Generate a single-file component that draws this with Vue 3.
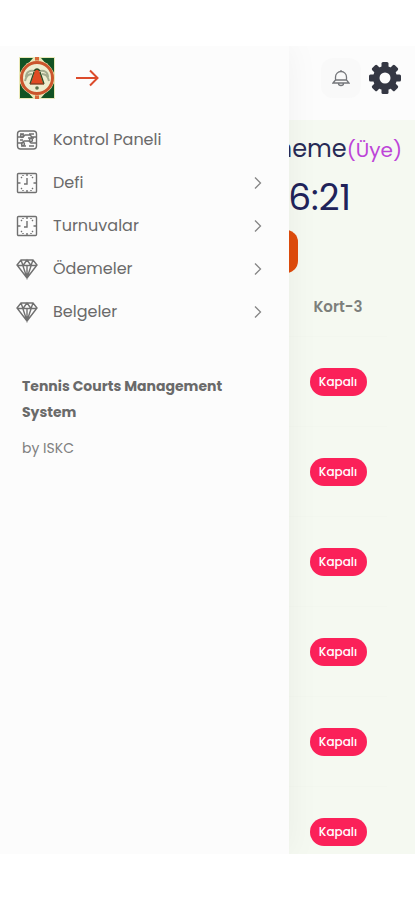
<template>
  <div class="screen">
    <div class="app">
      <!-- Drawer -->
      <aside class="drawer">
        <div class="drawer-head">
          <a href="#" class="brand" aria-label="ISKC">
            <svg width="36" height="42" viewBox="0 0 36 42">
              <rect width="36" height="42" fill="#e9e8b8" />
              <path d="M1 1h13L1 16zM35 1H22l13 15zM1 41h13L1 26zM35 41H22l13-15z" fill="#125223" />
              <path d="M16 0h4v4h-4zM16 38h4v4h-4z" fill="#d9683a" />
              <circle cx="18" cy="21" r="17.5" fill="#e9e3b0" />
              <circle cx="18" cy="21" r="15.5" fill="#eeedcf" stroke="#cb552c" stroke-width="3" />
              <path d="M7 20c0-5 4-7 8-6M6 24c1-5 4-7 7-7M29 20c0-5-4-7-8-6M30 24c-1-5-4-7-7-7" fill="none" stroke="#a3ab8d" stroke-width="2" />
              <path d="M18 12c2.500 0 2.500 3 3.500 6l3 9h-13l3-9c1-3 1-6 3.500-6z" fill="#e04a22" />
              <path d="M15 15l-4 12M21 15l4 12M15 14q3-4 6 0" fill="none" stroke="#2c4c25" stroke-width="1.3" />
              <path d="M11 27h14" stroke="#7b3b20" stroke-width="1.3" />
              <circle cx="18" cy="31" r="1.8" fill="#59724b" />
            </svg>
          </a>
          <button class="icon-btn" type="button" aria-label="Menüyü kapat">
            <svg width="24" height="18" viewBox="0 0 24 18" fill="none" stroke="#dc4b2b" stroke-width="2">
              <path d="M1 9h21M15 1.500L22.500 9 15 16.500" />
            </svg>
          </button>
        </div>

        <nav class="menu">
          <a v-for="item in items" :key="item.label" href="#" class="menu-item">
            <svg v-if="item.icon === 'panel'" class="menu-icon" viewBox="0 0 22 22">
              <rect x="1.500" y="2" width="19" height="18" rx="3" />
              <path d="M2 8h5l2-2h5l2 2h4M2 14h4l2-2h5l2 2h5M4 5h4M13 5h5M12 9h6M4 11h3M5 17h5M13 17h5" />
              <circle cx="6" cy="7" r="1.500" />
              <circle cx="15" cy="11" r="1.500" />
              <circle cx="7" cy="15" r="1.500" />
            </svg>
            <svg v-else-if="item.icon === 'clock'" class="menu-icon" viewBox="0 0 22 22">
              <rect x="1.500" y="1.500" width="19" height="19" rx="1" />
              <path d="M11 6v6H8M11 2v2M11 18v2M2 11h2.500M17.500 11H20M5 5l1 1M17 5l-1 1M5 17l1-1M17 17l-1-1M7 3v1M15 3v1M7 18v1M15 18v1" />
            </svg>
            <svg v-else class="menu-icon" viewBox="0 0 22 22">
              <path d="M5 2h12l4 5-10 13L1 7zM1 7.500h20M5 2l2 5.500L11 2l4 5.500L17 2M7 8l4 12 4-12M11 8v12" />
            </svg>
            <span class="menu-label">{{ item.label }}</span>
            <svg v-if="item.sub" class="chevron" width="8" height="14" viewBox="0 0 8 14">
              <path d="M1 1.500L6.500 7 1 12.500" />
            </svg>
          </a>
        </nav>

        <div class="about">
          <p class="about-name">Tennis Courts Management System</p>
          <p class="about-by">by ISKC</p>
        </div>
      </aside>

      <!-- Page, mostly covered by the open drawer -->
      <div class="page">
        <header class="topbar">
          <button class="bell" type="button" aria-label="Bildirimler">
            <svg width="18" height="18" viewBox="0 0 18 18" fill="none" stroke="#74767a" stroke-width="1.300">
              <path d="M3.500 11V8a5.500 5.500 0 0 1 11 0V11M1 14l2.500-3h11l2.500 3zM6.500 14.500a2.500 2 0 0 0 5 0M9 1v1.500" />
            </svg>
          </button>
          <button class="icon-btn" type="button" aria-label="Ayarlar">
            <svg width="34" height="34" viewBox="-17 -17 34 34">
              <g fill="#343743">
                <rect v-for="a in [0, 45, 90, 135]" :key="a" x="-3.500" y="-16" width="7" height="32" rx="1.500" :transform="`rotate(${a})`" />
                <circle r="12" />
              </g>
              <circle r="5.500" fill="#fcfcfc" />
            </svg>
          </button>
        </header>

        <main class="content">
          <h1 class="user">neme<span class="role">(Üye)</span></h1>
          <div class="time">6:21</div>
          <div class="action">
            <button class="action-btn" type="button" aria-label="Rezervasyon"></button>
          </div>
          <table class="courts">
            <thead>
              <tr><th scope="col">Kort-3</th></tr>
            </thead>
            <tbody>
              <tr v-for="n in 6" :key="n">
                <td><span class="badge">Kapalı</span></td>
              </tr>
            </tbody>
          </table>
        </main>
      </div>
    </div>
  </div>
</template>

<script setup>
const items = [
  { label: 'Kontrol Paneli', icon: 'panel', sub: false },
  { label: 'Defi', icon: 'clock', sub: true },
  { label: 'Turnuvalar', icon: 'clock', sub: true },
  { label: 'Ödemeler', icon: 'diamond', sub: true },
  { label: 'Belgeler', icon: 'diamond', sub: true }
]
</script>

<style>
body {
  background: #fff;
}
</style>

<style scoped>
.screen {
  box-sizing: border-box;
  height: 100vh;
  padding: 46px 0;
  font-family: Poppins, Inter, "Liberation Sans", sans-serif;
  color: #6a6a6a;
}

.app {
  display: flex;
  height: 100%;
  overflow: hidden;
}

button {
  padding: 0;
  border: none;
  background: none;
  cursor: pointer;
}

svg {
  display: block;
}

/* Drawer */
.drawer {
  position: relative;
  z-index: 1;
  flex: 0 0 289px;
  background: #fcfcfc;
  box-shadow: 0 0 32px rgba(0, 0, 0, 0.05);
}

.drawer-head {
  display: flex;
  align-items: center;
  gap: 20px;
  height: 64px;
  padding-left: 19px;
}

.menu {
  padding-top: 8px;
}

.menu-item {
  display: flex;
  align-items: center;
  height: 43px;
  padding: 0 27px 0 16px;
  color: inherit;
  font-size: 16px;
  text-decoration: none;
}

.menu-icon {
  width: 22px;
  height: 22px;
  margin-right: 15px;
  fill: none;
  stroke: #707070;
  stroke-width: 1.4;
}

.menu-label {
  flex: 1;
}

.chevron {
  fill: none;
  stroke: #858585;
  stroke-width: 1.3;
}

.about {
  padding: 40px 22px 0;
  font-size: 14px;
  line-height: 26px;
}

.about p {
  margin: 0 0 10px;
}

.about-name {
  font-weight: 700;
}

.about-by {
  color: #808080;
}

/* Page */
.page {
  flex: 1;
  min-width: 0;
  overflow: hidden;
  background: #f5f9f1;
}

.topbar {
  display: flex;
  align-items: center;
  justify-content: flex-end;
  gap: 7px;
  height: 74px;
  padding: 0 13px 10px 0;
  box-sizing: border-box;
  background: #fcfcfc;
}

.bell {
  display: grid;
  place-items: center;
  width: 40px;
  height: 40px;
  border-radius: 12px;
  background: #f9f9f9;
}

.user {
  display: flex;
  align-items: baseline;
  justify-content: flex-end;
  margin: 0;
  padding: 9px 13px 0 0;
  color: #272a55;
  font-size: 24px;
  font-weight: 400;
  line-height: 40px;
}

.role {
  color: #bd45d8;
  font-size: 20px;
}

.time {
  display: flex;
  justify-content: flex-end;
  padding-right: 64px;
  color: #20235a;
  font-size: 36px;
  line-height: 56px;
}

.action {
  display: flex;
  justify-content: flex-end;
  padding: 4px 117px 3px 0;
}

.action-btn {
  flex: none;
  width: 96px;
  height: 43px;
  border-radius: 12px;
  background: #e04c0c;
}

/* Courts */
.courts {
  width: 98px;
  border-collapse: collapse;
  text-align: center;
}

.courts th {
  height: 60px;
  padding: 0;
  color: #7c7f7b;
  font-size: 15px;
  font-weight: 600;
}

.courts td {
  height: 89px;
  padding: 0;
  border-top: 1px solid #f3f7ef;
}

.badge {
  display: inline-block;
  width: 57px;
  border-radius: 14px;
  background: #fb2159;
  color: #fff;
  font-size: 12px;
  font-weight: 500;
  line-height: 28px;
}
</style>
